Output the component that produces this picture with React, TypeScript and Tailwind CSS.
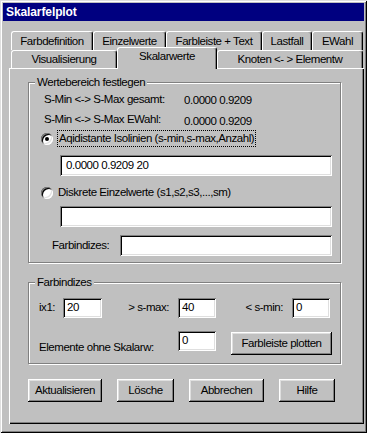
import React from 'react'

const raised =
  'bg-[#c0c0c0] shadow-[inset_-1px_-1px_0_#000,inset_1px_1px_0_#fff,inset_-2px_-2px_0_#808080,inset_2px_2px_0_#dfdfdf]'
const sunken =
  'bg-white shadow-[inset_1px_1px_0_#808080,inset_-1px_-1px_0_#fff,inset_2px_2px_0_#000,inset_-2px_-2px_0_#dfdfdf]'

function Field({ value = '', className = '' }: { value?: string; className?: string }) {
  return (
    <div className={`${sunken} flex items-center pl-[4px] ${className}`}>
      <span>{value}</span>
    </div>
  )
}

function Radio({ checked }: { checked?: boolean }) {
  return (
    <div className={`${sunken} w-[12px] h-[12px] rounded-full flex items-center justify-center shrink-0`}>
      {checked && <div className="w-[4px] h-[4px] rounded-full bg-black" />}
    </div>
  )
}

function Button({ label, className = '' }: { label: string; className?: string }) {
  return (
    <div className={`${raised} h-[23px] flex items-center justify-center ${className}`}>{label}</div>
  )
}

function Tab({ label, w, selected }: { label: string; w: string; selected?: boolean }) {
  return (
    <div
      className={`${w} ${
        selected ? 'relative z-10 h-[22px] -mt-[3px] -mb-[1px] pb-[4px]' : 'h-full pt-[1px]'
      } bg-[#c0c0c0] border-l border-t border-white border-r border-r-black rounded-t-[3px] shadow-[inset_-1px_0_0_#808080] flex items-center justify-center whitespace-nowrap`}
    >
      {label}
    </div>
  )
}

function Group({ label, className = '', children }: { label: string; className?: string; children: React.ReactNode }) {
  return (
    <div className={`relative border border-[#808080] shadow-[inset_1px_1px_0_#fff,1px_1px_0_#fff] ${className}`}>
      <span className="absolute -top-[8px] left-[6px] bg-[#c0c0c0] px-[2px] leading-[14px]">{label}</span>
      {children}
    </div>
  )
}

export default function App() {
  return (
    <div className="w-[367px] h-[433px] bg-[#c0c0c0] p-[3px] text-black text-[11.5px] tracking-[-0.45px] font-['Liberation_Sans',Arial,sans-serif] shadow-[inset_1px_1px_0_#dfdfdf,inset_-1px_-1px_0_#000,inset_2px_2px_0_#fff,inset_-2px_-2px_0_#808080]">
      {/* title bar */}
      <div className="h-[18px] bg-[#000080] text-white font-bold text-[12px] tracking-[-0.1px] pl-[3px] flex items-center">
        Skalarfelplot
      </div>

      {/* tabs */}
      <div className="ml-[8px] mt-[10px] flex h-[19px]">
        <Tab label="Farbdefinition" w="w-[82px]" />
        <Tab label="Einzelwerte" w="w-[73px]" />
        <Tab label="Farbleiste + Text" w="w-[96px]" />
        <Tab label="Lastfall" w="w-[50px]" />
        <Tab label="EWahl" w="w-[51px]" />
      </div>
      <div className="ml-[8px] flex h-[18px]">
        <Tab label="Visualisierung" w="w-[106px]" />
        <Tab label="Skalarwerte" w="w-[100px]" selected />
        <Tab label="Knoten <- > Elementw" w="w-[146px]" />
      </div>

      {/* panel */}
      <div className="ml-[6px] w-[355px] h-[356px] pt-[14px] pl-[19px] shadow-[inset_1px_1px_0_#fff,inset_-1px_-1px_0_#000,inset_-2px_-2px_0_#808080]">
        <Group label="Wertebereich festlegen" className="w-[313px] h-[181px]">
          <div className="mt-[10px] h-[14px] flex items-center">
            <span className="pl-[15px] w-[155px]">S-Min &lt;-&gt; S-Max gesamt:</span>
            <span className="pt-[2px]">0.0000 0.9209</span>
          </div>
          <div className="mt-[6px] h-[14px] flex items-center">
            <span className="pl-[15px] w-[155px]">S-Min &lt;-&gt; S-Max EWahl:</span>
            <span className="pt-[3px]">0.0000 0.9209</span>
          </div>
          <div className="mt-[3px] h-[17px] flex items-center pl-[12px]">
            <Radio checked />
            <span className="ml-[4px] h-[17px] border border-dotted border-black px-[1px] flex items-center">
              Aqidistante Isolinien (s-min,s-max,Anzahl)
            </span>
          </div>
          <Field value="0.0000 0.9209 20" className="mt-[8px] ml-[31px] w-[272px] h-[21px] pl-[6px]" />
          <div className="mt-[9px] h-[16px] flex items-center pl-[12px]">
            <Radio />
            <span className="ml-[5px]">Diskrete Einzelwerte (s1,s2,s3,...,sm)</span>
          </div>
          <Field className="mt-[5px] ml-[31px] w-[272px] h-[21px]" />
          <div className="mt-[8px] flex items-center">
            <span className="pl-[23px] w-[91px]">Farbindizes:</span>
            <Field className="w-[212px] h-[21px]" />
          </div>
        </Group>

        <Group label="Farbindizes" className="mt-[19px] w-[313px] h-[82px]">
          <div className="mt-[15px] flex items-center">
            <span className="pl-[10px] w-[34px]">ix1:</span>
            <Field value="20" className="w-[39px] h-[20px] pl-[3px]" />
            <span className="w-[76px] text-right pr-[9px]">&gt; s-max:</span>
            <Field value="40" className="w-[38px] h-[20px] pl-[3px]" />
            <span className="w-[76px] text-right pr-[9px]">&lt; s-min:</span>
            <Field value="0" className="w-[38px] h-[20px] pl-[3px]" />
          </div>
          <div className="mt-[13px] flex items-start">
            <span className="pl-[10px] w-[149px] pt-[8px]">Elemente ohne Skalarw:</span>
            <Field value="0" className="w-[38px] h-[20px] pl-[3px]" />
            <Button label="Farbleiste plotten" className="ml-[15px] mt-[1px] w-[101px] h-[22px]" />
          </div>
        </Group>

        <div className="mt-[15px] flex">
          <Button label="Aktualisieren" className="w-[74px]" />
          <Button label="Lösche" className="ml-[15px] w-[57px]" />
          <Button label="Abbrechen" className="ml-[15px] w-[75px]" />
          <Button label="Hilfe" className="ml-[15px] w-[56px]" />
        </div>
      </div>
    </div>
  )
}
